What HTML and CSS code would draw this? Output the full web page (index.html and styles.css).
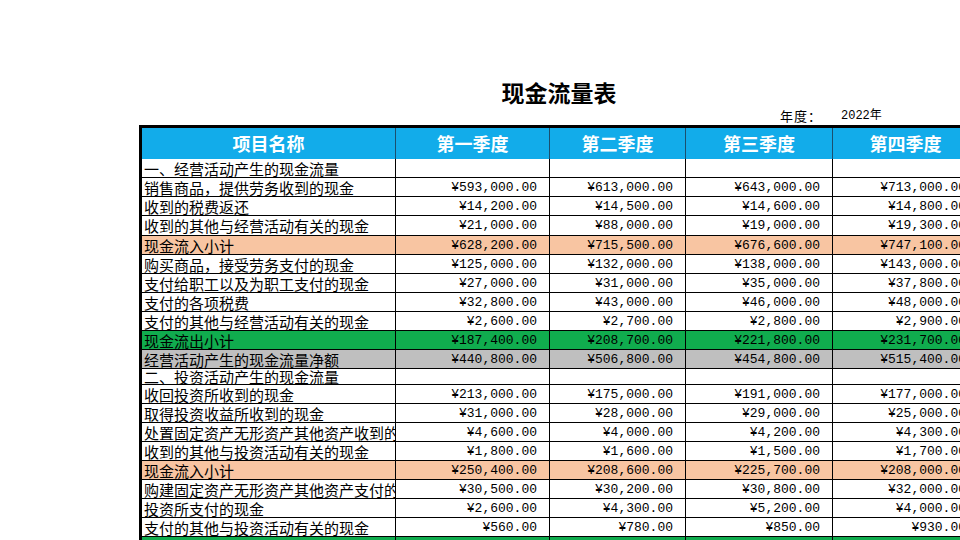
FILE: index.html
```html
<!DOCTYPE html>
<html lang="zh-CN">
<head>
<meta charset="utf-8">
<title>现金流量表</title>
<link rel="stylesheet" href="styles.css">
</head>
<body>
<div class="sheet">
  <h1 class="title">现金流量表</h1>
  <div class="meta">
    <span class="meta-label">年度：</span>
    <span class="meta-value">2022年</span>
  </div>
  <div class="grid">
    <div class="row head">
      <div class="cell">项目名称</div>
      <div class="cell">第一季度</div>
      <div class="cell">第二季度</div>
      <div class="cell">第三季度</div>
      <div class="cell">第四季度</div>
    </div>
    <div class="row">
      <div class="cell name">一、经营活动产生的现金流量</div>
      <div class="cell num"></div><div class="cell num"></div><div class="cell num"></div><div class="cell num"></div>
    </div>
    <div class="row">
      <div class="cell name">销售商品，提供劳务收到的现金</div>
      <div class="cell num">¥593,000.00</div><div class="cell num">¥613,000.00</div><div class="cell num">¥643,000.00</div><div class="cell num">¥713,000.00</div>
    </div>
    <div class="row">
      <div class="cell name">收到的税费返还</div>
      <div class="cell num">¥14,200.00</div><div class="cell num">¥14,500.00</div><div class="cell num">¥14,600.00</div><div class="cell num">¥14,800.00</div>
    </div>
    <div class="row tall">
      <div class="cell name">收到的其他与经营活动有关的现金</div>
      <div class="cell num">¥21,000.00</div><div class="cell num">¥88,000.00</div><div class="cell num">¥19,000.00</div><div class="cell num">¥19,300.00</div>
    </div>
    <div class="row inflow">
      <div class="cell name">现金流入小计</div>
      <div class="cell num">¥628,200.00</div><div class="cell num">¥715,500.00</div><div class="cell num">¥676,600.00</div><div class="cell num">¥747,100.00</div>
    </div>
    <div class="row">
      <div class="cell name">购买商品，接受劳务支付的现金</div>
      <div class="cell num">¥125,000.00</div><div class="cell num">¥132,000.00</div><div class="cell num">¥138,000.00</div><div class="cell num">¥143,000.00</div>
    </div>
    <div class="row">
      <div class="cell name">支付给职工以及为职工支付的现金</div>
      <div class="cell num">¥27,000.00</div><div class="cell num">¥31,000.00</div><div class="cell num">¥35,000.00</div><div class="cell num">¥37,800.00</div>
    </div>
    <div class="row">
      <div class="cell name">支付的各项税费</div>
      <div class="cell num">¥32,800.00</div><div class="cell num">¥43,000.00</div><div class="cell num">¥46,000.00</div><div class="cell num">¥48,000.00</div>
    </div>
    <div class="row">
      <div class="cell name">支付的其他与经营活动有关的现金</div>
      <div class="cell num">¥2,600.00</div><div class="cell num">¥2,700.00</div><div class="cell num">¥2,800.00</div><div class="cell num">¥2,900.00</div>
    </div>
    <div class="row outflow">
      <div class="cell name">现金流出小计</div>
      <div class="cell num">¥187,400.00</div><div class="cell num">¥208,700.00</div><div class="cell num">¥221,800.00</div><div class="cell num">¥231,700.00</div>
    </div>
    <div class="row net">
      <div class="cell name">经营活动产生的现金流量净额</div>
      <div class="cell num">¥440,800.00</div><div class="cell num">¥506,800.00</div><div class="cell num">¥454,800.00</div><div class="cell num">¥515,400.00</div>
    </div>
    <div class="row short">
      <div class="cell name">二、投资活动产生的现金流量</div>
      <div class="cell num"></div><div class="cell num"></div><div class="cell num"></div><div class="cell num"></div>
    </div>
    <div class="row">
      <div class="cell name">收回投资所收到的现金</div>
      <div class="cell num">¥213,000.00</div><div class="cell num">¥175,000.00</div><div class="cell num">¥191,000.00</div><div class="cell num">¥177,000.00</div>
    </div>
    <div class="row">
      <div class="cell name">取得投资收益所收到的现金</div>
      <div class="cell num">¥31,000.00</div><div class="cell num">¥28,000.00</div><div class="cell num">¥29,000.00</div><div class="cell num">¥25,000.00</div>
    </div>
    <div class="row">
      <div class="cell name">处置固定资产无形资产其他资产收到的现金</div>
      <div class="cell num">¥4,600.00</div><div class="cell num">¥4,000.00</div><div class="cell num">¥4,200.00</div><div class="cell num">¥4,300.00</div>
    </div>
    <div class="row">
      <div class="cell name">收到的其他与投资活动有关的现金</div>
      <div class="cell num">¥1,800.00</div><div class="cell num">¥1,600.00</div><div class="cell num">¥1,500.00</div><div class="cell num">¥1,700.00</div>
    </div>
    <div class="row inflow">
      <div class="cell name">现金流入小计</div>
      <div class="cell num">¥250,400.00</div><div class="cell num">¥208,600.00</div><div class="cell num">¥225,700.00</div><div class="cell num">¥208,000.00</div>
    </div>
    <div class="row">
      <div class="cell name">购建固定资产无形资产其他资产支付的现金</div>
      <div class="cell num">¥30,500.00</div><div class="cell num">¥30,200.00</div><div class="cell num">¥30,800.00</div><div class="cell num">¥32,000.00</div>
    </div>
    <div class="row">
      <div class="cell name">投资所支付的现金</div>
      <div class="cell num">¥2,600.00</div><div class="cell num">¥4,300.00</div><div class="cell num">¥5,200.00</div><div class="cell num">¥4,000.00</div>
    </div>
    <div class="row">
      <div class="cell name">支付的其他与投资活动有关的现金</div>
      <div class="cell num">¥560.00</div><div class="cell num">¥780.00</div><div class="cell num">¥850.00</div><div class="cell num">¥930.00</div>
    </div>
    <div class="row outflow">
      <div class="cell name">现金流出小计</div>
      <div class="cell num">¥33,660.00</div><div class="cell num">¥35,280.00</div><div class="cell num">¥36,850.00</div><div class="cell num">¥36,930.00</div>
    </div>
  </div>
</div>
</body>
</html>
```

FILE: styles.css
```css
html, body {
  margin: 0;
  padding: 0;
  background: #fff;
  overflow: hidden;
  width: 960px;
  height: 540px;
}

body {
  font-family: "Noto Sans CJK SC", "Noto Sans", sans-serif;
  color: #000;
}

.sheet {
  margin-left: 139px;
  padding-top: 77px;
  width: 840px;
}

.title {
  margin: 0;
  height: 30px;
  line-height: 30px;
  font-size: 23px;
  font-weight: 700;
  text-align: center;
}

.meta {
  display: grid;
  grid-template-columns: 3px 254px 154px 136px 147px 146px;
  height: 18px;
  line-height: 18px;
  font-size: 13px;
}

.meta-label {
  grid-column: 5;
  text-align: right;
  padding-right: 11px;
  letter-spacing: 1px;
}

.meta-value {
  grid-column: 6;
  padding-left: 8px;
  font-family: "Liberation Mono", "Noto Sans CJK SC", monospace;
  font-size: 12px;
}

.grid {
  border-left: 3px solid #000;
  border-top: 3px solid #000;
}

.row {
  display: grid;
  grid-template-columns: 254px 154px 136px 147px 146px;
  height: 19px;
  box-sizing: border-box;
  border-bottom: 1px solid #000;
}

.cell {
  box-sizing: border-box;
  border-right: 1px solid #000;
  overflow: hidden;
  white-space: nowrap;
}

.head {
  height: 31px;
  background: #12acea;
  border-bottom: 0;
}

.head .cell {
  color: #fff;
  font-size: 18px;
  font-weight: 700;
  line-height: 30px;
  text-align: center;
  border-right-color: #1b4f6e;
}

.name {
  font-size: 15px;
  line-height: 16px;
  padding-left: 2px;
  padding-top: 2px;
}

.num {
  font-family: "Liberation Mono", monospace;
  font-size: 13px;
  line-height: 16px;
  padding-top: 2px;
  text-align: right;
  padding-right: 12px;
}

.tall {
  height: 20px;
}

.short {
  height: 16px;
}

.short .name {
  line-height: 15px;
  padding-top: 0;
}

.inflow {
  background: #f8c5a2;
}

.outflow {
  background: #10ac4e;
}

.net {
  background: #bfbfbf;
}
```
